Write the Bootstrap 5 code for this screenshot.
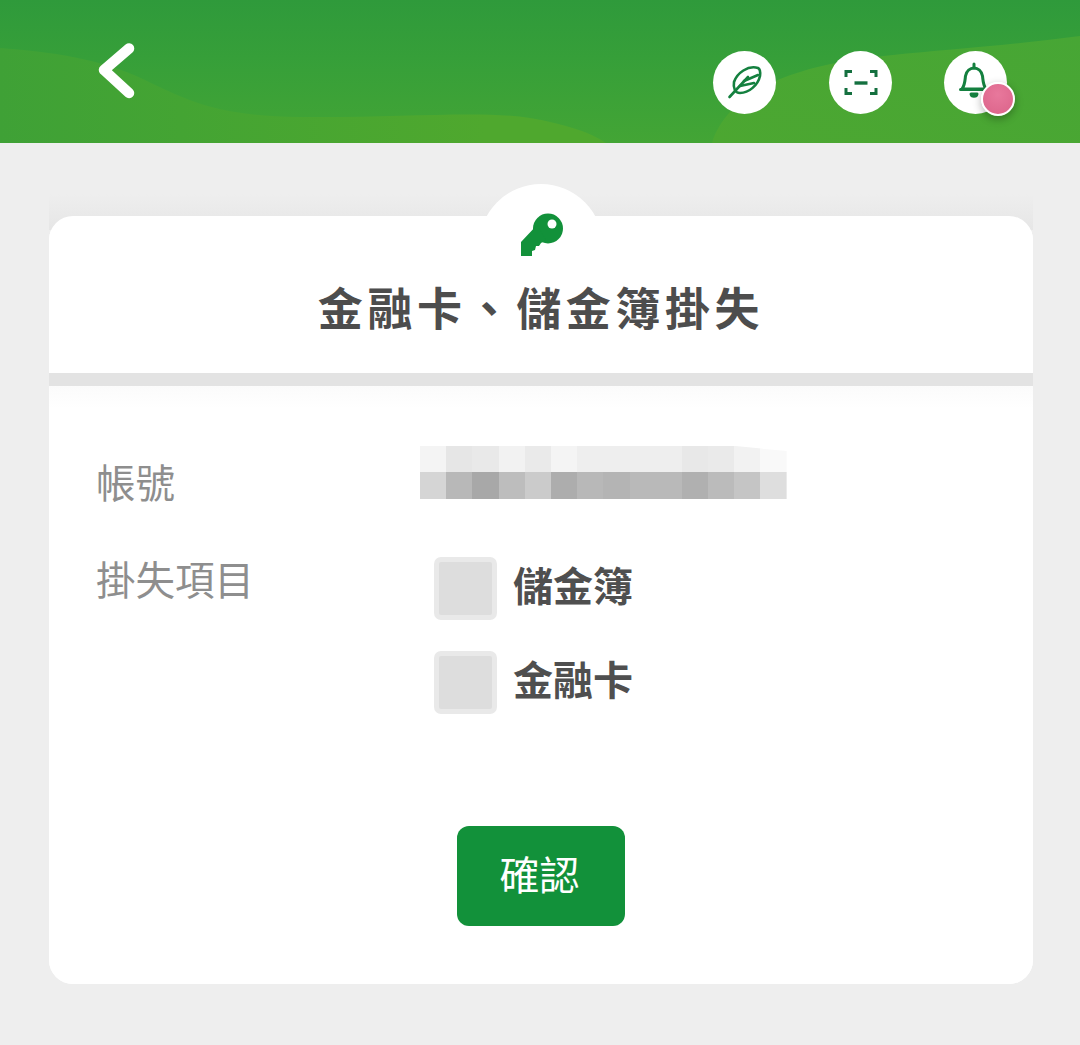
<!DOCTYPE html>
<html lang="zh-Hant">
<head>
<meta charset="utf-8">
<title>金融卡、儲金簿掛失</title>
<link href="https://cdn.jsdelivr.net/npm/bootstrap@5.3.0/dist/css/bootstrap.min.css" rel="stylesheet">
<style>
body{background:#eee;font-family:"Noto Sans CJK TC","Noto Sans CJK SC","Liberation Sans",sans-serif;height:1045px;overflow:hidden}
.top-band{height:143px;position:relative;padding:51px 73px 0 97px;background:linear-gradient(180deg,#2f9a3b 0%,#369f39 40%,#43a535 100%)}
.wave-art{position:absolute;inset:0;width:100%;height:100%}
.top-band>*:not(.wave-art){position:relative}
.back-mark{margin-top:-9px;width:40px;height:58px}
.round-tool{width:63px;height:63px;background:#fff;border-radius:50%;position:relative}
.tool-row{gap:52.5px}
.pink-dot{position:absolute;left:37px;top:31px;width:34px;height:34px;border-radius:50%;background:radial-gradient(circle at 50% 35%,#e8789c,#db6389);border:2px solid #fff;box-shadow:0 3px 8px rgba(0,0,0,.3)}
.sheet{margin:73px 47px 0 49px;background:#fff;border-radius:24px;position:relative}
.sheet::before{content:"";position:absolute;left:0;right:0;top:-22px;height:36px;background:linear-gradient(180deg,#eeeeee,#e6e6e6);z-index:0}
.sheet-top{position:relative;background:#fff;border-radius:24px 24px 0 0;padding:66px 0 41px;text-align:center}
.key-tab{position:absolute;left:50%;top:-32px;width:124px;height:124px;margin-left:-62px;border-radius:50%;background:#fff;z-index:0}
.key-mark{position:absolute;left:471px;top:-3px;width:44px;height:44px}
.sheet-title{position:relative;font-size:45px;line-height:50px;font-weight:700;letter-spacing:4.6px;color:#4d4d4d;margin:0}
.rule-bar{height:13px;background:#e3e3e3}
.sheet-body{padding:60px 48px 58px;background:linear-gradient(180deg,#fbfbfb 0,#fff 22px);border-radius:0 0 24px 24px}
.field-name{width:323px;flex:none;font-size:39.5px;color:#8e8e8e;letter-spacing:0;margin-left:-1px;padding-right:0}
.name-a{line-height:53px;margin-top:8px;width:324px}
.name-b{line-height:48px;margin-top:-3px;width:324px}
.mosaic{display:grid;grid-template-columns:repeat(14,26.2px);grid-template-rows:26px 27px;clip-path:polygon(0 0,86% 0,100% 8%,100% 100%,0 100%)}
.row-one{height:64px;margin-bottom:47px}
.tick-item{gap:17px;margin-left:14px;height:63px;margin-bottom:31px}
.tick-box{width:63px;height:63px;background:#ddd;border:5px solid #e9e9e9;border-radius:7px}
.tick-text{font-size:40px;font-weight:700;color:#4f4f4f;line-height:1;margin-top:-9px;margin-left:-1px}
.ok-btn{width:168px;height:100px;background:#12913a;border:0;border-radius:12px;color:#fff;font-size:40px;letter-spacing:0;padding:0 3px 6px 0;margin-top:81px}
.ok-btn:hover{background:#12913a;color:#fff}
.c1{background:#f4f4f4}.c2{background:#e6e6e6}.c3{background:#e9e9e9}.c4{background:#f2f2f2}.c5{background:#eaeaea}.c6{background:#eee}.c7{background:#e8e8e8}.c8{background:#f9f9f9}
.d1{background:#d5d5d5}.d2{background:#b8b8b8}.d3{background:#a8a8a8}.d4{background:#bdbdbd}.d5{background:#cbcbcb}.d6{background:#adadad}.d7{background:#b4b4b4}.d8{background:#b9b9b9}.d9{background:#b0b0b0}.d10{background:#bbb}.d11{background:#c5c5c5}.d12{background:#dedede}
</style>
</head>
<body>
<header class="top-band d-flex justify-content-between align-items-start">
  <svg class="wave-art" viewBox="0 0 1080 143" preserveAspectRatio="none" aria-hidden="true">
    <defs>
      <linearGradient id="waveOne" x1="0" y1="0" x2="1" y2="0"><stop offset="0" stop-color="#3fa136"/><stop offset=".3" stop-color="#44a433"/><stop offset=".8" stop-color="#4fa82e"/></linearGradient>
      <linearGradient id="waveTwo" x1="0" y1="1" x2="1" y2="0"><stop offset="0" stop-color="#4ca731"/><stop offset="1" stop-color="#47a635"/></linearGradient>
    </defs>
    <path d="M0 48C50 52 100 58 145 80C190 102 220 116 300 117C400 118 480 110 530 118C565 124 590 132 606 143H0Z" fill="url(#waveOne)"/>
    <path d="M712 143C722 110 755 85 800 72C860 52 960 52 1080 36V143Z" fill="url(#waveTwo)"/>
  </svg>
  <svg class="back-mark" viewBox="0 0 40 58" aria-hidden="true"><path d="M32 6.500L7 28L32 51" fill="none" stroke="#fff" stroke-width="10.500" stroke-linecap="round" stroke-linejoin="round"/></svg>
  <div class="d-flex tool-row">
    <div class="round-tool">
      <svg width="63" height="63" viewBox="0 0 63 63" fill="none" stroke="#14803f" stroke-width="2.600" stroke-linecap="round" stroke-linejoin="round" aria-hidden="true">
        <path d="M45 17C35 14 24 22 21 31C20 37 22 42 27 42C36 42 45 34 47 25C47.500 21 47 18 45 17Z"/>
        <path d="M16.500 46L35 26"/>
        <path d="M27 35L41 32M31 30L45 24"/>
      </svg>
    </div>
    <div class="round-tool">
      <svg width="63" height="63" viewBox="0 0 63 63" fill="none" stroke="#14703f" stroke-width="3" aria-hidden="true">
        <path d="M17 26V20.500H23M41 20.500H47V26M17 37V42.500H23M41 42.500H47V37"/>
        <path d="M25.500 32H38.500" stroke-width="3.400"/>
      </svg>
    </div>
    <div class="round-tool">
      <svg width="63" height="63" viewBox="0 0 63 63" fill="none" stroke="#14803f" stroke-width="3" stroke-linecap="round" stroke-linejoin="round" aria-hidden="true">
        <path d="M30 13V17"/>
        <path d="M18 38C21 34 21 29 21.500 25C22.500 20 26 17 30 17C34 17 37.500 20 38.500 25C39 29 39 34 42 38Z"/>
        <path d="M16.500 38.500H43.500"/>
        <path d="M27 43C27.500 46 32.500 46 33 43Z" fill="#14803f"/>
      </svg>
      <span class="pink-dot"></span>
    </div>
  </div>
</header>

<main class="sheet">
  <div class="key-tab"></div>
  <div class="sheet-top">
    <svg class="key-mark" viewBox="0 0 44 44" aria-hidden="true">
      <circle cx="28" cy="15.500" r="15" fill="#12913a"/>
      <path d="M1 29L17 12L26 27L21 30L19 33L16 33L15 37L12 38L12 43H1Z" fill="#12913a"/>
      <circle cx="32" cy="11" r="4.500" fill="#fff"/>
    </svg>
    <h1 class="sheet-title">金融卡、儲金簿掛失</h1>
  </div>
  <div class="rule-bar"></div>
  <div class="sheet-body">
    <div class="d-flex row-one">
      <div class="field-name name-a">帳號</div>
      <div class="mosaic" aria-hidden="true">
        <i class="c1"></i><i class="c2"></i><i class="c3"></i><i class="c4"></i><i class="c5"></i><i class="c1"></i><i class="c6"></i><i class="c6"></i><i class="c6"></i><i class="c6"></i><i class="c7"></i><i class="c5"></i><i class="c4"></i><i class="c8"></i>
        <i class="d1"></i><i class="d2"></i><i class="d3"></i><i class="d4"></i><i class="d5"></i><i class="d6"></i><i class="d2"></i><i class="d7"></i><i class="d8"></i><i class="d8"></i><i class="d9"></i><i class="d10"></i><i class="d11"></i><i class="d12"></i>
      </div>
    </div>
    <div class="d-flex">
      <div class="field-name name-b">掛失項目</div>
      <div>
        <div class="d-flex align-items-center tick-item"><span class="tick-box"></span><span class="tick-text">儲金簿</span></div>
        <div class="d-flex align-items-center tick-item"><span class="tick-box"></span><span class="tick-text">金融卡</span></div>
      </div>
    </div>
    <div class="text-center"><button type="button" class="btn ok-btn">確認</button></div>
  </div>
</main>
</body>
</html>
